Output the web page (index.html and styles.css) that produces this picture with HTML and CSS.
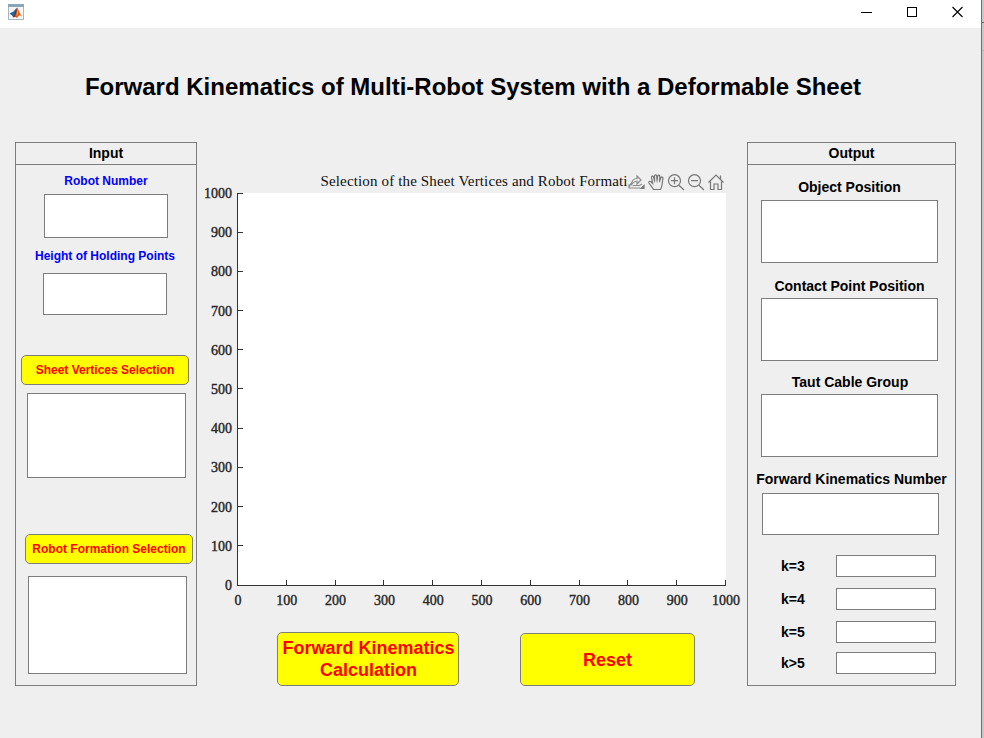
FILE: index.html
```html
<!DOCTYPE html>
<html lang="en">
<head>
<meta charset="utf-8">
<title>Forward Kinematics</title>
<link rel="stylesheet" href="styles.css">
</head>
<body>
<div class="desktop">
  <div class="window">
    <header class="titlebar">
      <svg class="app-icon" width="16" height="16" viewBox="0 0 16 16">
        <rect x=".5" y=".5" width="15" height="15" fill="#f4f5f6" stroke="#a9b5bd"/>
        <rect width="16" height="3" fill="#8aa5b8"/>
        <path d="M1.500 9.500L5.500 7.500 8.500 4 8 10l-2.500 3.500-1.500-2z" fill="#2763a0"/>
        <path d="M5.500 13.500L7 8.500 9 3.500l1.500 4-2.500 5z" fill="#7c2a1c"/>
        <path d="M9 3.500q1 .5 1.800 3.500L13.800 12.500l-2.300-1.500-2.500 3L7 12.500l1.500-4z" fill="#e2601c"/>
        <path d="M9.200 5l.9 4-1.600 3.500z" fill="#f6b63c"/>
      </svg>
      <div class="controls">
        <svg width="11" height="11"><path d="M0 6.500h10.500" class="line"/></svg>
        <svg width="11" height="11"><rect x=".5" y="1.500" width="9" height="9" class="line"/></svg>
        <svg width="11" height="11"><path d="M.5 1l10 10M10.500 1l-10 10" class="cross"/></svg>
      </div>
    </header>
    <h1 class="title"><span>Forward Kinematics of Multi-Robot System with a Deformable Sheet</span></h1>
    <main class="content">
      <section class="panel input">
        <h2>Input</h2>
        <label class="robot-label">Robot Number</label>
        <div class="field robot"></div>
        <label class="height-label">Height of Holding Points</label>
        <div class="field height"></div>
        <button class="vertices-btn">Sheet Vertices Selection</button>
        <div class="field vertices"></div>
        <button class="formation-btn">Robot Formation Selection</button>
        <div class="field formation"></div>
      </section>
      <section class="center">
        <svg class="chart" width="550" height="480" viewBox="197 142 550 480">
          <rect x="238" y="193" width="488" height="392" fill="#fff"/>
          <path class="axis" d="M237.500 193v392.500H726"/>
          <path class="axis" d="M238 193.500h5M238 232.500h5M238 271.500h5M238 310.500h5M238 349.500h5M238 388.500h5M238 428.500h5M238 467.500h5M238 506.500h5M238 545.500h5"/>
          <path class="axis" d="M286.500 585v-5M335.500 585v-5M383.500 585v-5M432.500 585v-5M481.500 585v-5M530.500 585v-5M579.500 585v-5M627.500 585v-5M676.500 585v-5M725.500 585v-5"/>
          <g class="ticks" text-anchor="end">
            <text x="232" y="198">1000</text><text x="232" y="237">900</text><text x="232" y="276">800</text><text x="232" y="315.500">700</text><text x="232" y="354.500">600</text><text x="232" y="393.500">500</text><text x="232" y="433">400</text><text x="232" y="472">300</text><text x="232" y="511.500">200</text><text x="232" y="551">100</text><text x="232" y="590">0</text>
          </g>
          <g class="ticks" text-anchor="middle">
            <text x="238" y="605">0</text><text x="286.800" y="605">100</text><text x="335.600" y="605">200</text><text x="384.400" y="605">300</text><text x="433.200" y="605">400</text><text x="482" y="605">500</text><text x="530.800" y="605">600</text><text x="579.600" y="605">700</text><text x="628.400" y="605">800</text><text x="677.200" y="605">900</text><text x="726" y="605">1000</text>
          </g>
          <text class="chart-title" x="320.500" y="186" textLength="307">Selection of the Sheet Vertices and Robot Formati</text>
          <g class="tool">
            <path class="export" d="M629 184.500v3.500h11M629 187.500q.5-3.500 3-4.500M631.500 184.500c.5-5 3-6 5.500-6v-2.500l4 4-4 4V181c-2.500 0-3.500 1-5.500 3.500zM632.500 185.500h7l2.500-1.500"/>
            <path d="M641 188.500h3v-3z" fill="#777"/>
            <path d="M653.500 189.500c-1-2.500-3-4-4.500-6.500-.7-1.500.8-2.200 2-1.200l1.700 1.700-1.200-6c-.2-1.600 1.700-1.800 2.100-.4l1 3.900-.1-5c.1-1.500 2-1.500 2.200 0l.4 4.800.6-4.800c.3-1.400 2.200-1.200 2.100.3l-.2 5 1.300-3.700c.7-1.300 2.300-.7 2 .8-.6 4-.6 8-2.400 11.100z"/>
            <path class="fine" d="M654.600 181v1.500M657.100 180.500v2M659.600 181v1.500"/>
            <circle cx="674.500" cy="180.700" r="6"/><path d="M679 185.200l5 4.800M671 180.700h7M674.500 177.200v7"/>
            <circle cx="694.500" cy="180.700" r="6"/><path d="M699 185.200l5 4.800M691 180.700h7"/>
            <path d="M708.500 182.500l7.500-7.500 7.500 7.500M710.500 181.500v8h3.500v-5.500h4v5.500h3.500v-8M720.500 179v-3.500"/>
          </g>
        </svg>
        <div class="actions">
          <button class="calculate">Forward Kinematics<br>Calculation</button>
          <button class="reset">Reset</button>
        </div>
      </section>
      <section class="panel output">
        <h2>Output</h2>
        <label class="object-label">Object Position</label>
        <div class="field result"></div>
        <label class="contact-label">Contact Point Position</label>
        <div class="field result"></div>
        <label class="cable-label">Taut Cable Group</label>
        <div class="field result"></div>
        <label class="number-label">Forward Kinematics Number</label>
        <div class="field number"></div>
        <div class="count first"><label>k=3</label><div class="field"></div></div>
        <div class="count"><label>k=4</label><div class="field"></div></div>
        <div class="count"><label>k=5</label><div class="field"></div></div>
        <div class="count last"><label>k&gt;5</label><div class="field"></div></div>
      </section>
    </main>
  </div>
  <aside class="edge"><div class="edge-top"></div><div class="edge-mid"></div></aside>
</div>
</body>
</html>
```
FILE: styles.css
```css
* { box-sizing: border-box; }
body { margin: 0; overflow: hidden; font-family: "Liberation Sans", Arial, sans-serif; color: #000; }
.desktop { display: flex; width: 984px; height: 738px; background: #c8c8c8; }
.window { width: 982px; height: 738px; background: #efefef; border-right: 1px solid #6e6e6e; }
.edge { width: 2px; }
.edge-top { height: 23px; background: #c5c9c9; border-bottom: 1px solid #666; }
.edge-mid { height: 28px; border-bottom: 1px solid #b8b8b8; }
.titlebar { display: flex; justify-content: space-between; height: 28px; padding: 4px 18px 0 8px; background: #fff; }
.controls { display: flex; gap: 34.500px; padding-top: 2px; }
.controls svg { overflow: visible; }
.line { fill: none; stroke: #000; stroke-width: 1; shape-rendering: crispEdges; }
.cross { fill: none; stroke: #000; stroke-width: 1.100; }
.title { display: flex; justify-content: center; margin: 0; height: 114px; padding: 45px 35px 0 0; font-size: 24px; line-height: 28px; white-space: nowrap; }
.content { display: flex; height: 544px; padding-left: 15px; }
.panel { border: 1px solid #7d7d7d; display: flex; flex-direction: column; align-items: flex-start; }
.panel h2 { align-self: stretch; margin: 0; height: 22px; border-bottom: 1px solid #7d7d7d; font-size: 14px; line-height: 21px; text-align: center; flex: none; }
.field { background: #fff; border: 1px solid #7d7d7d; flex: none; }
.panel > label { align-self: center; font-weight: bold; white-space: nowrap; line-height: 16px; flex: none; }
button { display: block; padding: 0; flex: none; font-family: inherit; font-weight: bold; color: #f00; background: #ff0; border: 1px solid #7d7d7d; border-radius: 5px; white-space: nowrap; }

.input { width: 182px; }
.input > label { color: #00f; font-size: 12px; }
.input button { width: 168px; height: 30px; font-size: 12px; }
.robot-label { margin-top: 8px; }
.robot { width: 124px; height: 44px; margin: 5px 0 0 28px; }
.height-label { margin: 10px 2px 0 0; }
.height { width: 124px; height: 42px; margin: 9px 0 0 27px; }
.vertices-btn { margin: 40px 0 0 5px; }
.vertices { width: 159px; height: 85px; margin: 8px 0 0 11px; }
.formation-btn { margin: 56px 0 0 9px; }
.formation { width: 159px; height: 98px; margin: 12px 0 0 12px; }

.center { width: 550px; }
.chart { display: block; }
.axis { fill: none; stroke: #333; stroke-width: 1; shape-rendering: crispEdges; }
.ticks { font: 14px "Liberation Serif", "Times New Roman", serif; fill: #262626; stroke: #262626; stroke-width: .4px; }
.chart-title { font: 15px "Liberation Serif", "Times New Roman", serif; fill: #111; }
.tool { fill: none; stroke: #777; stroke-width: 1.200; }
.export { stroke: #8a8a8a; }
.fine { stroke-width: .8; }
.actions { display: flex; align-items: flex-end; height: 64px; gap: 61px; padding-left: 80px; }
.actions button { font-size: 18px; line-height: 22px; }
.actions .calculate { width: 182px; height: 54px; padding-left: 1px; }
.reset { width: 175px; height: 53px; }

.output { width: 209px; }
.output label { font-size: 14px; font-weight: bold; line-height: 16px; }
.object-label { margin: 14px 4px 0 0; }
.result { width: 177px; height: 63px; margin: 4px 0 0 13px; }
.object-label + .result { margin-top: 5px; }
.contact-label { margin: 15px 4px 0 0; }
.cable-label { margin: 13px 3px 0 0; }
.number-label { margin-top: 14px; }
.number { width: 177px; height: 42px; margin: 6px 0 0 14px; }
.count { display: flex; align-items: center; height: 22px; margin: 11px 0 0 33px; }
.count.first { margin-top: 20px; }
.count.last { margin-top: 9px; }
.count label { width: 55px; }
.count .field { width: 100px; height: 22px; }
```
